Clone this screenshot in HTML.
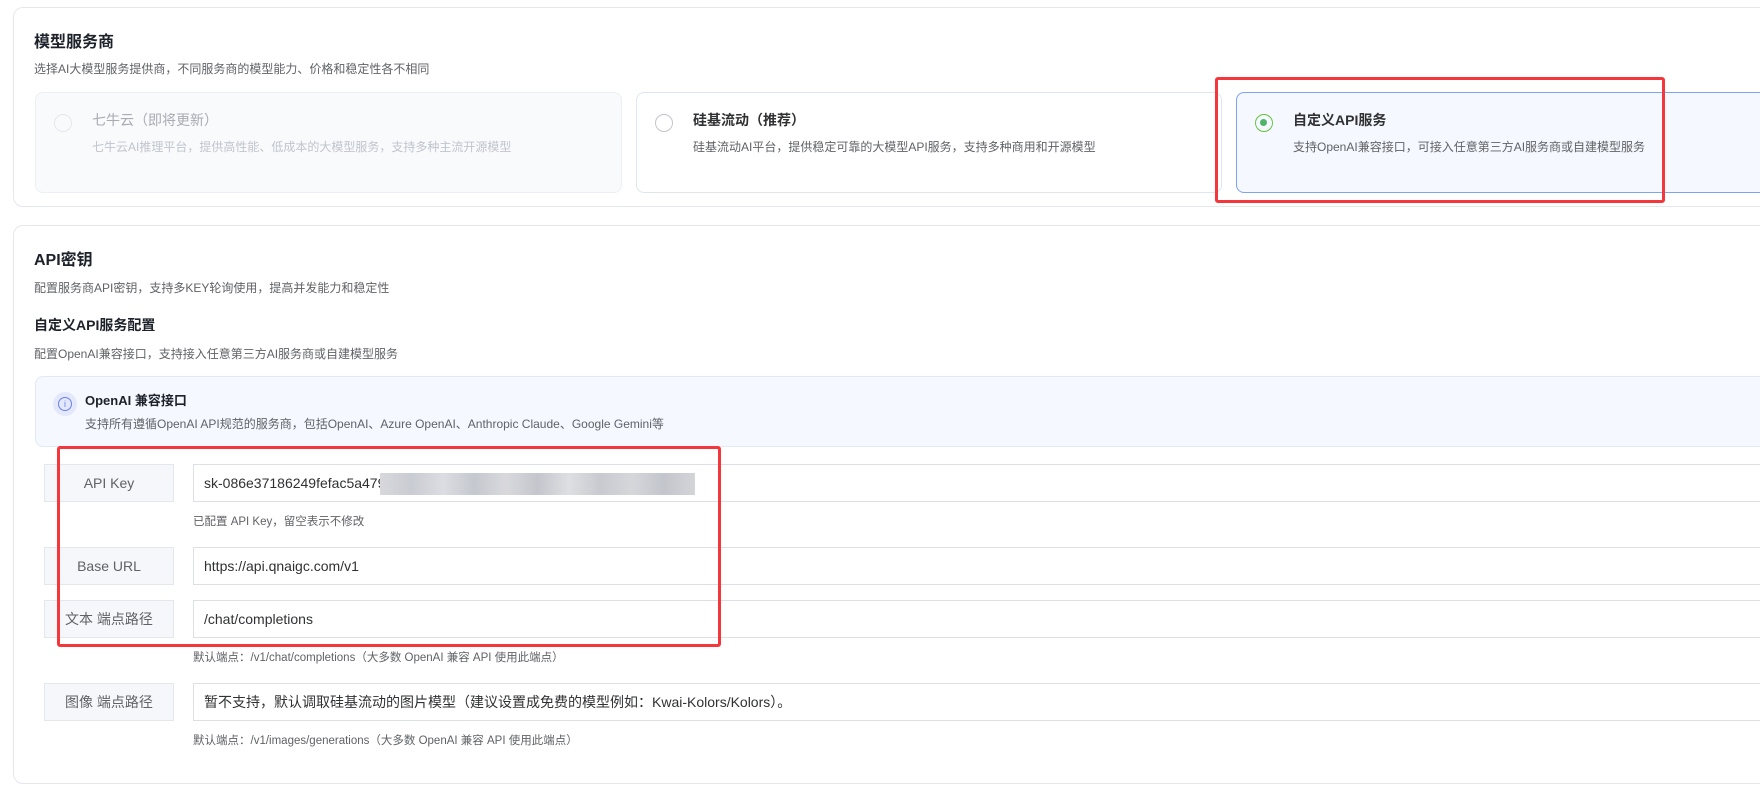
<!DOCTYPE html>
<html><head><meta charset="utf-8"><style>
*{box-sizing:border-box;margin:0;padding:0}
body{width:1760px;height:787px;background:#fff;font-family:"Liberation Sans","Noto Sans CJK SC",sans-serif;position:relative;overflow:hidden;color:#303133}
.abs{position:absolute}
.card{position:absolute;border:1px solid #e4e7ed;border-radius:10px;background:#fff}
.h{font-weight:bold;color:#1d2129}
.sub{font-size:12px;color:#606266;white-space:nowrap}
.opt{position:absolute;top:92px;height:101px;border:1px solid #dfe6f0;border-radius:8px;background:#fff}
.radio{position:absolute;left:18px;top:21px;width:18px;height:18px;border:1.5px solid #c0c4cc;border-radius:50%}
.ot{position:absolute;left:56px;top:17px;font-size:14px;font-weight:bold;white-space:nowrap}
.od{position:absolute;left:56px;top:45px;font-size:12px;color:#606266;white-space:nowrap}
.lbl{position:absolute;left:44px;width:130px;height:38px;background:#f5f7fa;border:1px solid #e4e7ed;color:#606266;font-size:14px;text-align:center;line-height:36px}
.inp{position:absolute;left:193px;width:1600px;height:38px;border:1px solid #dcdfe6;font-size:14px;color:#303133;line-height:36px;padding-left:10px;white-space:nowrap}
.hint{position:absolute;left:193px;font-size:11.5px;color:#606266;white-space:nowrap}
.red{position:absolute;border:3px solid #f5363a;border-radius:3px}
</style></head><body>
<div class="card" style="left:13px;top:7px;width:1800px;height:200px"></div>
<div class="abs h" style="left:34px;top:28px;font-size:16px">模型服务商</div>
<div class="abs sub" style="left:34px;top:60px">选择AI大模型服务提供商，不同服务商的模型能力、价格和稳定性各不相同</div>

<div class="opt" style="left:35px;width:587px;background:#f9fafc;border-color:#eceff4">
 <div class="radio" style="border-color:#e4e7ed"></div>
 <div class="ot" style="color:#a8abb2;font-weight:normal">七牛云（即将更新）</div>
 <div class="od" style="color:#c0c4cc">七牛云AI推理平台，提供高性能、低成本的大模型服务，支持多种主流开源模型</div>
</div>
<div class="opt" style="left:636px;width:586px">
 <div class="radio"></div>
 <div class="ot">硅基流动（推荐）</div>
 <div class="od">硅基流动AI平台，提供稳定可靠的大模型API服务，支持多种商用和开源模型</div>
</div>
<div class="opt" style="left:1236px;width:600px;border-color:#7ea2f5;background:#f5f8fe">
 <div class="radio" style="border-color:#67c23a;left:18px"><div style="position:absolute;left:4px;top:4px;width:7px;height:7px;border-radius:50%;background:#52b36a"></div></div>
 <div class="ot">自定义API服务</div>
 <div class="od">支持OpenAI兼容接口，可接入任意第三方AI服务商或自建模型服务</div>
</div>
<div class="red" style="left:1215px;top:77px;width:450px;height:126px"></div>

<div class="card" style="left:13px;top:225px;width:1800px;height:559px"></div>
<div class="abs h" style="left:34px;top:246px;font-size:16px">API密钥</div>
<div class="abs sub" style="left:34px;top:279px">配置服务商API密钥，支持多KEY轮询使用，提高并发能力和稳定性</div>
<div class="abs h" style="left:34px;top:315px;font-size:14px">自定义API服务配置</div>
<div class="abs sub" style="left:34px;top:345px">配置OpenAI兼容接口，支持接入任意第三方AI服务商或自建模型服务</div>
<div class="abs" style="left:35px;top:376px;width:1800px;height:71px;background:#f5f8ff;border:1px solid #e1e9f7;border-radius:8px"></div>
<div class="abs" style="left:53px;top:392px;width:24px;height:24px;border-radius:50%;background:#e3e8fb"><div style="position:absolute;left:5px;top:5px;width:14px;height:14px;border:1px solid #6b7ff0;border-radius:50%;color:#6b7ff0;font-size:9px;text-align:center;line-height:12px">i</div></div>
<div class="abs" style="left:85px;top:390px;font-size:13px;font-weight:bold;color:#1d2129">OpenAI 兼容接口</div>
<div class="abs sub" style="left:85px;top:415px">支持所有遵循OpenAI API规范的服务商，包括OpenAI、Azure OpenAI、Anthropic Claude、Google Gemini等</div>

<div class="lbl" style="top:464px">API Key</div>
<div class="inp" style="top:464px">sk-086e37186249fefac5a479</div>
<div class="abs" style="left:380px;top:473px;width:315px;height:22px;background:linear-gradient(90deg,#d8d8dc,#c9ccd2 10%,#dcdde2 20%,#c5c8cf 30%,#d9d9dd 40%,#c4c6cd 50%,#dedfe2 60%,#c8cad0 70%,#d6d7db 80%,#c3c5cc 90%,#d4d5d9)"></div>
<div class="hint" style="top:513px">已配置 API Key，留空表示不修改</div>
<div class="lbl" style="top:547px">Base URL</div>
<div class="inp" style="top:547px">https://api.qnaigc.com/v1</div>
<div class="lbl" style="top:600px">文本 端点路径</div>
<div class="inp" style="top:600px">/chat/completions</div>
<div class="hint" style="top:649px">默认端点：/v1/chat/completions（大多数 OpenAI 兼容 API 使用此端点）</div>
<div class="lbl" style="top:683px">图像 端点路径</div>
<div class="inp" style="top:683px">暂不支持，默认调取硅基流动的图片模型（建议设置成免费的模型例如：Kwai-Kolors/Kolors）。</div>
<div class="hint" style="top:732px">默认端点：/v1/images/generations（大多数 OpenAI 兼容 API 使用此端点）</div>
<div class="red" style="left:57px;top:446px;width:664px;height:201px"></div>
</body></html>
